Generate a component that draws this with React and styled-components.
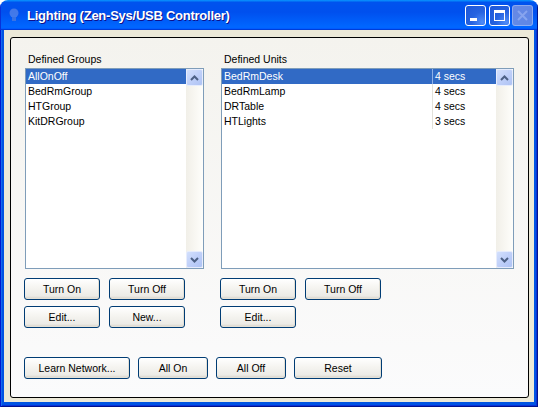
import React from "react";
import styled, { createGlobalStyle } from "styled-components";

const Global = createGlobalStyle`
    html, body {
        margin: 0;
        padding: 0;
        background: #ffffff;
    }
    body {
        font-family: "Liberation Sans", Arial, sans-serif;
    }
`

const Win = styled.div`
    display: flex;
    flex-direction: column;
    width: 538px;
    height: 407px;
    border-radius: 8px 8px 0 0;
    overflow: hidden;
`
const TitleBar = styled.div`
    display: flex;
    align-items: center;
    flex: 0 0 30px;
    padding: 0 5px 0 6px;
    background: linear-gradient(180deg, #0997ff, #0053ee 8%, #0050ee 40%, #0066ff 88%, #0066ff 93%, #005bff 95%, #003dd7 96%, #003dd7);
    box-shadow: inset 1px 0 #0831d9, inset -1px 0 #00138c;
`
const TitleText = styled.div`
    flex: 1;
    margin-left: 5px;
    color: #ffffff;
    font-weight: 700;
    font-size: 13px;
    letter-spacing: -0.25px;
    text-shadow: 1px 1px #0f1089;
    white-space: nowrap;
`
const CapButton = styled.div`
    display: flex;
    align-items: center;
    justify-content: center;
    width: 21px;
    height: 21px;
    box-sizing: border-box;
    margin-left: ${p => p.$gap || 0}px;
    border: 1px solid ${p => p.$disabled ? "rgba(255,255,255,0.4)" : "#ffffff"};
    border-radius: 3px;
    background: ${p => p.$disabled
        ? "linear-gradient(135deg, #8199e4, #7590e0)"
        : "radial-gradient(circle at 85% 85%, #4f8cf8 0%, #2663e0 45%, #1c56d8 100%)"};
    opacity: ${p => p.$disabled ? 0.8 : 1};
`
const Frame = styled.div`
    flex: 1;
    display: flex;
    padding: 0 4px 5px 4px;
    background: #0054e3;
    box-shadow: inset 1px 0 #0019cf, inset -1px 0 #00138c, inset 0 -1px #00138c, inset 2px 0 #166aee, inset -2px 0 #0831d9, inset 0 -2px #0831d9;
`
const Client = styled.div`
    flex: 1;
    display: flex;
    padding: 7px 5px 4px 6px;
    background: #ece9d8;
`
const Panel = styled.div`
    flex: 1;
    display: grid;
    grid-template-columns: 180px 294px;
    grid-template-rows: auto auto;
    column-gap: 16px;
    row-gap: 28px;
    padding: 15px 14px 18px 13px;
    border: 1px solid #000000;
    border-radius: 3px;
    background: linear-gradient(180deg, #f4f3ee, #fbfbfc);
`
const Column = styled.div`
    display: flex;
    flex-direction: column;
`
const Label = styled.div`
    height: 13px;
    line-height: 13px;
    padding-left: 4px;
    font-size: 10.5px;
    color: #000000;
`
const ListBox = styled.div`
    display: flex;
    height: 201px;
    margin: 2px 0 0 1px;
    border: 1px solid #7f9db9;
    box-sizing: border-box;
    background: #ffffff;
`
const Rows = styled.div`
    flex: 1;
    display: flex;
    flex-direction: column;
`
const Row = styled.div`
    display: flex;
    height: 15px;
    line-height: 15px;
    font-size: 10.5px;
    color: ${p => p.$selected ? "#ffffff" : "#000000"};
    background: ${p => p.$selected ? "#316ac5" : "transparent"};
`
const Cell = styled.div`
    padding-left: 2px;
    width: ${p => p.$width ? p.$width + "px" : "auto"};
    flex: ${p => p.$width ? "none" : 1};
    box-sizing: border-box;
    white-space: nowrap;
    border-left: ${p => p.$divider ? (p.$selected ? "1px solid #8fb0e6" : "1px solid #e2e1da") : "none"};
`
const ScrollBar = styled.div`
    display: flex;
    flex-direction: column;
    justify-content: space-between;
    width: 17px;
    background: linear-gradient(90deg, #f1efe8, #fefefb);
`
const ScrollBtn = styled.div`
    display: flex;
    align-items: center;
    justify-content: center;
    width: 17px;
    height: 17px;
    box-sizing: border-box;
    border: 1px solid #e6ecfc;
    border-radius: 2px;
    background: linear-gradient(135deg, #d2dffc, #bccdf8 60%, #aec3f4);
`
const BtnGrid = styled.div`
    display: grid;
    grid-template-columns: 76px 76px;
    column-gap: 9px;
    row-gap: 6px;
    margin-top: 9px;
`
const BottomRow = styled.div`
    grid-column: 1 / 3;
    display: flex;
    gap: 8px;
`
const Button = styled.div`
    display: flex;
    align-items: center;
    justify-content: center;
    width: ${p => p.$w || 76}px;
    height: 22px;
    box-sizing: border-box;
    border: 1px solid #003c74;
    border-radius: 3px;
    background: linear-gradient(180deg, #ffffff, #f5f4f0 45%, #ecebe6 85%, #d6d0c5);
    box-shadow: inset -1px -1px #e3e0d6;
    font-size: 10.5px;
    color: #000000;
`

const Chevron = ({ up }) => (
    <svg width="9" height="6" viewBox="0 0 9 6">
        <polyline
            points={up ? "1,5 4.5,1.5 8,5" : "1,1 4.5,4.5 8,1"}
            fill="none" stroke="#4d6185" strokeWidth="2" />
    </svg>
)

const Scroll = () => (
    <ScrollBar>
        <ScrollBtn><Chevron up /></ScrollBtn>
        <ScrollBtn><Chevron /></ScrollBtn>
    </ScrollBar>
)

const groups = ["AllOnOff", "BedRmGroup", "HTGroup", "KitDRGroup"];
const units = [
    ["BedRmDesk", "4 secs"],
    ["BedRmLamp", "4 secs"],
    ["DRTable", "4 secs"],
    ["HTLights", "3 secs"],
];

function App() {
    return (
        <>
            <Global />
            <Win>
                <TitleBar>
                    <svg width="16" height="16" viewBox="0 0 16 16" opacity="0.6">
                        <circle cx="8" cy="6" r="4.5" fill="#6f93e6" />
                        <rect x="6" y="10" width="4" height="4" fill="#5f83d8" />
                    </svg>
                    <TitleText>Lighting (Zen-Sys/USB Controller)</TitleText>
                    <CapButton>
                        <svg width="19" height="19" viewBox="0 0 19 19">
                            <rect x="4" y="12" width="7" height="3" fill="#ffffff" />
                        </svg>
                    </CapButton>
                    <CapButton $gap={3}>
                        <svg width="19" height="19" viewBox="0 0 19 19">
                            <rect x="4.5" y="4.5" width="10" height="10" fill="none" stroke="#ffffff" strokeWidth="1" />
                            <rect x="4" y="4" width="11" height="3" fill="#ffffff" />
                        </svg>
                    </CapButton>
                    <CapButton $gap={2} $disabled>
                        <svg width="19" height="19" viewBox="0 0 19 19">
                            <path d="M5 5 L14 14 M14 5 L5 14" stroke="#a9b8ee" strokeWidth="2" />
                        </svg>
                    </CapButton>
                </TitleBar>
                <Frame>
                    <Client>
                        <Panel>
                            <Column>
                                <Label>Defined Groups</Label>
                                <ListBox>
                                    <Rows>
                                        {groups.map((g, i) => (
                                            <Row key={g} $selected={i === 0}>
                                                <Cell>{g}</Cell>
                                            </Row>
                                        ))}
                                    </Rows>
                                    <Scroll />
                                </ListBox>
                                <BtnGrid>
                                    <Button>Turn On</Button>
                                    <Button>Turn Off</Button>
                                    <Button>Edit...</Button>
                                    <Button>New...</Button>
                                </BtnGrid>
                            </Column>
                            <Column>
                                <Label>Defined Units</Label>
                                <ListBox>
                                    <Rows>
                                        {units.map(([name, secs], i) => (
                                            <Row key={name} $selected={i === 0}>
                                                <Cell $width={210}>{name}</Cell>
                                                <Cell $divider $selected={i === 0}>{secs}</Cell>
                                            </Row>
                                        ))}
                                    </Rows>
                                    <Scroll />
                                </ListBox>
                                <BtnGrid>
                                    <Button>Turn On</Button>
                                    <Button>Turn Off</Button>
                                    <Button>Edit...</Button>
                                </BtnGrid>
                            </Column>
                            <BottomRow>
                                <Button $w={106}>Learn Network...</Button>
                                <Button $w={70}>All On</Button>
                                <Button $w={70}>All Off</Button>
                                <Button $w={88}>Reset</Button>
                            </BottomRow>
                        </Panel>
                    </Client>
                </Frame>
            </Win>
        </>
    )
}

export default App;
